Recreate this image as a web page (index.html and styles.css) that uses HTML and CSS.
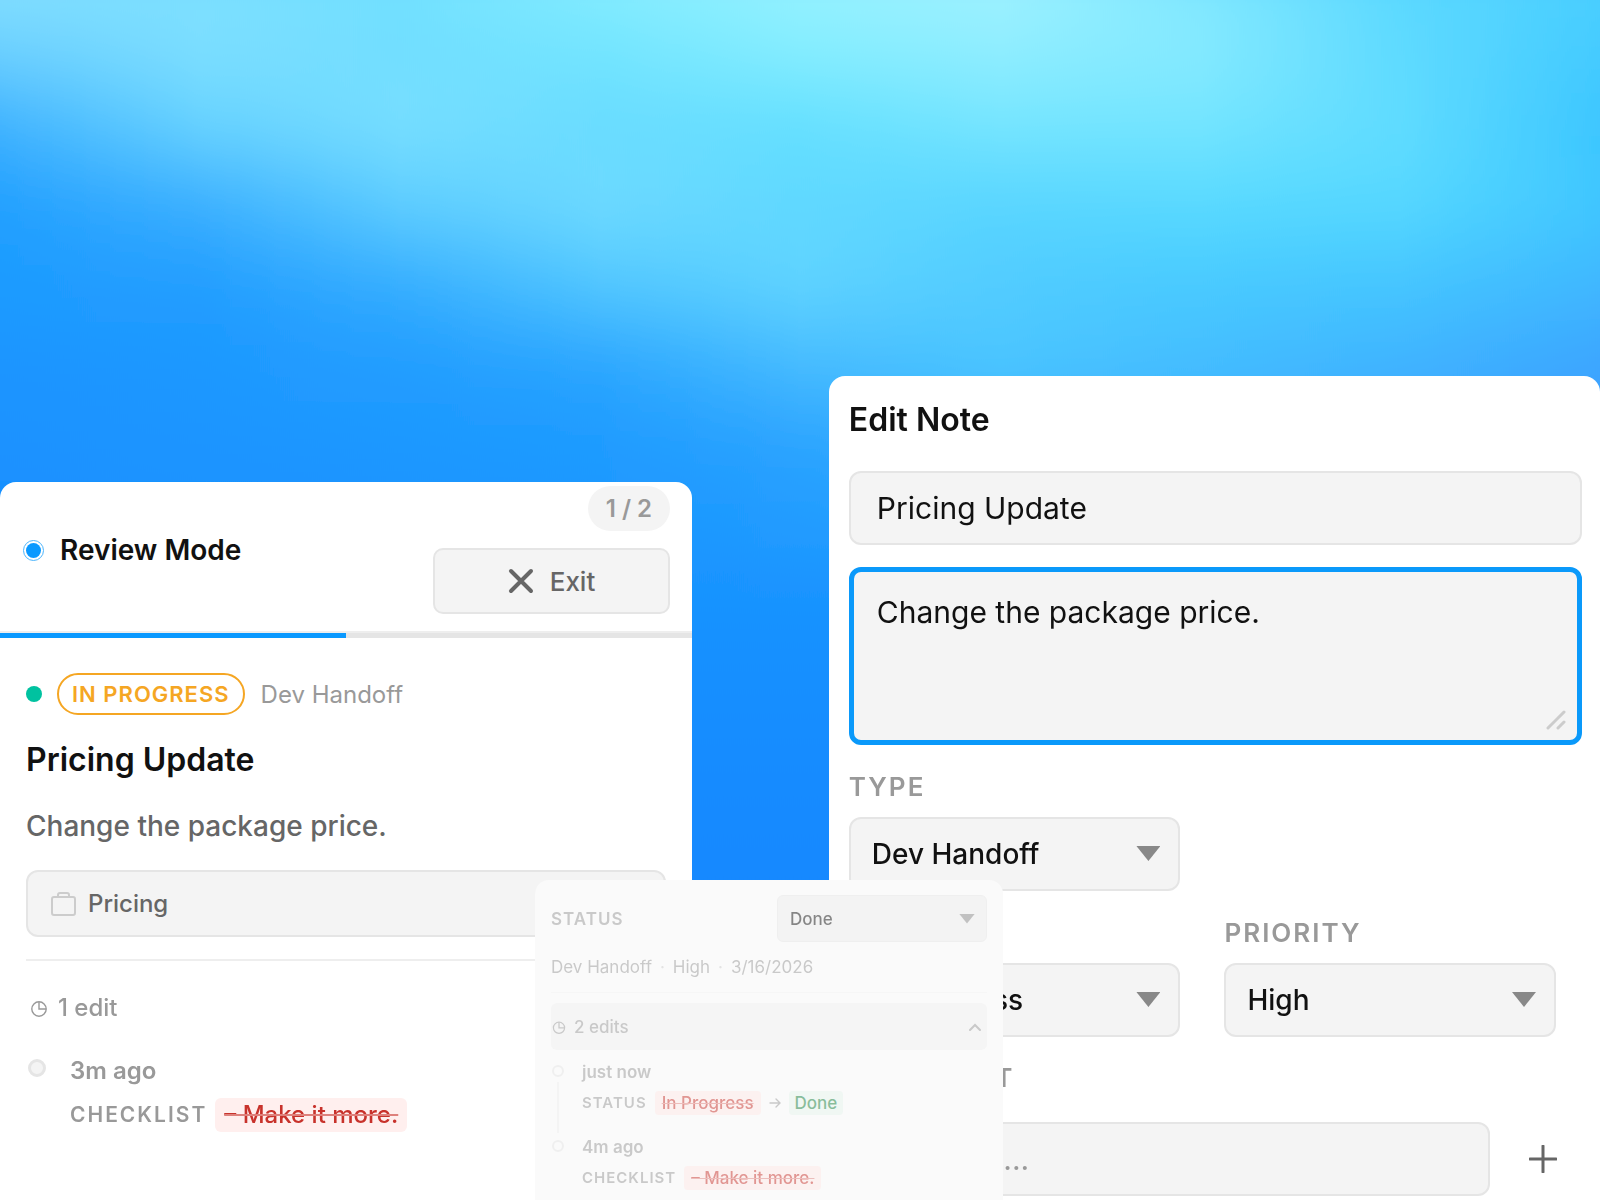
FILE: index.html
```html
<!DOCTYPE html>
<html lang="en">
<head>
    <meta charset="UTF-8">
    <meta name="viewport" content="width=device-width, initial-scale=1.0">
    <title>Review Mode</title>
    <link rel="stylesheet" href="styles.css">
</head>
<body>
    <svg class="filters" width="0" height="0" aria-hidden="true">
        <filter id="blend" x="0" y="0" width="1" height="1"><feGaussianBlur stdDeviation="0 38"/></filter>
    </svg>
    <div class="wallpaper" aria-hidden="true">
        <div class="band band-1"></div>
        <div class="band band-2"></div>
        <div class="band band-3"></div>
        <div class="band band-4"></div>
        <div class="band band-5"></div>
        <div class="band band-6"></div>
        <div class="band band-7"></div>
        <div class="band band-8"></div>
        <div class="band band-rest"></div>
    </div>

    <main class="stage">
        <section class="panel review">
            <header class="review-header">
                <div class="review-title">
                    <span class="live-dot"></span>
                    <h2>Review Mode</h2>
                </div>
                <div class="review-actions">
                    <span class="counter">1 / 2</span>
                    <button type="button" class="exit-btn">
                        <svg width="26" height="26" viewBox="0 0 26 26" fill="none" stroke="currentColor" stroke-width="4" stroke-linecap="round"><path d="M3 3l20 20M23 3L3 23"/></svg>
                        Exit
                    </button>
                </div>
            </header>
            <div class="progress"><div class="progress-fill" style="width: 50%"></div></div>

            <div class="review-body">
                <div class="tags">
                    <span class="priority-dot"></span>
                    <span class="badge">IN PROGRESS</span>
                    <span class="tag-type">Dev Handoff</span>
                </div>
                <h3>Pricing Update</h3>
                <p class="desc">Change the package price.</p>
                <div class="frame-box">
                    <svg width="26" height="26" viewBox="0 0 26 26" fill="none" stroke="#ccc" stroke-width="2"><rect x="1" y="6" width="23" height="18" rx="2"/><path d="M7 6V4a2 2 0 0 1 2-2h7a2 2 0 0 1 2 2v2"/></svg>
                    Pricing
                </div>
                <div class="history">
                    <div class="history-title">
                        <svg width="18" height="18" viewBox="0 0 18 18" fill="none" stroke="currentColor" stroke-width="1.4"><circle cx="9" cy="10" r="7.2"/><path d="M9 3v7h7"/></svg>
                        1 edit
                    </div>
                    <div class="entry">
                        <span class="entry-dot"></span>
                        <div>
                            <div class="entry-time">3m ago</div>
                            <div class="change"><span class="field">CHECKLIST</span><del>– Make it more.</del></div>
                        </div>
                    </div>
                </div>
            </div>
        </section>

        <section class="panel edit">
            <h1>Edit Note</h1>
            <input class="control" type="text" value="Pricing Update" aria-label="Title">
            <div class="textarea-wrap">
                <textarea class="control" aria-label="Description">Change the package price.</textarea>
                <svg class="grip" width="20" height="20" viewBox="0 0 20 20" stroke="#ccc" stroke-width="3" stroke-linecap="round"><path d="M2 18L18 2M12 18l6-6"/></svg>
            </div>

            <div class="fields">
                <div class="form-field">
                    <label for="type">TYPE</label>
                    <div class="select-wrap">
                        <select class="control" id="type"><option>Dev Handoff</option></select>
                    </div>
                </div>
            </div>
            <div class="fields">
                <div class="form-field">
                    <label for="status">STATUS</label>
                    <div class="select-wrap">
                        <select class="control" id="status"><option>In Progress</option></select>
                    </div>
                </div>
                <div class="form-field">
                    <label for="priority">PRIORITY</label>
                    <div class="select-wrap">
                        <select class="control" id="priority"><option>High</option></select>
                    </div>
                </div>
            </div>
            <div class="form-field checklist">
                <label for="item">CHECKLIST</label>
                <div class="add-row">
                    <input class="control" type="text" id="item" placeholder="Add item...">
                    <button type="button" class="add-btn" aria-label="Add">
                        <svg width="28" height="28" viewBox="0 0 28 28" stroke="#666" stroke-width="3" stroke-linecap="round"><path d="M14 1v26M1 14h26"/></svg>
                    </button>
                </div>
            </div>
        </section>

        <section class="popup">
            <div class="popup-content">
                <div class="status-row">
                    <label for="popupStatus">STATUS</label>
                    <div class="select-wrap">
                        <select class="control" id="popupStatus"><option>Done</option></select>
                    </div>
                </div>
                <div class="meta"><span>Dev Handoff</span><i>·</i><span>High</span><i>·</i><span>3/16/2026</span></div>
                <button type="button" class="edits-btn">
                    <svg width="14" height="14" viewBox="0 0 18 18" fill="none" stroke="currentColor" stroke-width="1.6"><circle cx="9" cy="10" r="7.2"/><path d="M9 3v7h7"/></svg>
                    2 edits
                    <svg class="chevron" width="12" height="8" viewBox="0 0 12 8" fill="none" stroke="currentColor" stroke-width="2" stroke-linecap="round"><path d="M1 7l5-5 5 5"/></svg>
                </button>
                <div class="entry with-line">
                    <span class="entry-dot"></span>
                    <div>
                        <div class="entry-time">just now</div>
                        <div class="change">
                            <span class="field">STATUS</span><del>In Progress</del>
                            <svg width="12" height="12" viewBox="0 0 12 12" fill="none" stroke="#999" stroke-width="1.4" stroke-linecap="round"><path d="M1 6h10M7 2l4 4-4 4"/></svg>
                            <ins>Done</ins>
                        </div>
                    </div>
                </div>
                <div class="entry">
                    <span class="entry-dot"></span>
                    <div>
                        <div class="entry-time">4m ago</div>
                        <div class="change"><span class="field">CHECKLIST</span><del>– Make it more.</del></div>
                    </div>
                </div>
            </div>
        </section>
    </main>
</body>
</html>
```

FILE: styles.css
```css
* {
    box-sizing: border-box;
}
body {
    margin: 0;
    font-family: Inter, "Liberation Sans", sans-serif;
    color: #111;
    background: #1a92ff;
    overflow: hidden;
}
h1, h2, h3, p {
    margin: 0;
}
button, input, select, textarea {
    font-family: inherit;
}
/* Background: horizontal gradients blended into each other vertically */
.filters {
    position: absolute;
}
.wallpaper {
    position: fixed;
    top: -80px;
    bottom: -80px;
    left: 0;
    right: 0;
    display: flex;
    flex-direction: column;
    filter: url(#blend);
}
.band {
    flex: none;
    height: 80px;
}
.band-1 {
    background: linear-gradient(90deg, #8ae2ff, #7ae0ff, #74e2ff, #8aeeff, #98f2ff, #a2f3ff, #7ae4ff, #5ad8ff, #4cd0ff);
}
.band-2 {
    background: linear-gradient(90deg, #70d4ff, #7edfff, #70deff, #74e6ff, #88efff, #92eeff, #86eaff, #5edaff, #46ccff);
}
.band-3 {
    background: linear-gradient(90deg, #40b4ff, #68d4ff, #78dfff, #68dcff, #64e0ff, #76e6ff, #74e5ff, #60dcff, #3cc6ff);
}
.band-4 {
    background: linear-gradient(90deg, #22a0ff, #3ab0ff, #5eceff, #6edaff, #60d8ff, #58d6ff, #58daff, #56d8ff, #40c8ff);
}
.band-5 {
    background: linear-gradient(90deg, #1e9bff, #229eff, #34aeff, #52c8ff, #60d4ff, #52ccff, #48caff, #44c6ff, #40b8ff);
}
.band-6 {
    background: linear-gradient(90deg, #1c95ff, #1e98ff, #229dff, #2aa6ff, #46bcff, #4cc6ff, #44beff, #40b4ff, #3ca6ff);
}
.band-7 {
    background: linear-gradient(90deg, #1a92ff, #1c95ff, #1e98ff, #1f9bff, #2ba4ff, #38b0ff, #3cacff, #3ca4ff, #3a9cff);
}
.band-8 {
    background: linear-gradient(90deg, #188fff, #1991ff, #1a94ff, #1b96ff, #219cff, #2aa4ff, #30a4ff, #309cff, #3096ff);
}
.band-rest {
    flex: 1;
    background: linear-gradient(#1a94ff, #148bff 30%, #1086ff 60%, #0c82ff);
}
.stage {
    position: relative;
    display: flex;
    justify-content: space-between;
    height: 100vh;
    overflow: hidden;
}
.panel {
    background: #fff;
    border-radius: 16px 16px 0 0;
}
/* Review panel */
.review {
    width: 43.25%;
    margin-top: 482px;
}
.review-header {
    display: flex;
    justify-content: space-between;
    align-items: center;
    height: 151px;
    padding: 0 22px 13px 23px;
    border-bottom: 2px solid #eee;
}
.review-title {
    display: flex;
    align-items: center;
    gap: 16px;
}
.review-title h2 {
    font-size: 28px;
    font-weight: 600;
}
.live-dot {
    width: 21px;
    height: 21px;
    border: 1px solid #4db5fc;
    border-radius: 50%;
    background: #0a99ff content-box;
    padding: 2px;
}
.review-actions {
    display: flex;
    flex-direction: column;
    align-items: flex-end;
    gap: 17px;
}
.counter {
    height: 45px;
    padding: 0 18px;
    border-radius: 23px;
    background: #f4f4f4;
    color: #999;
    font-size: 24px;
    font-weight: 600;
    line-height: 45px;
}
.exit-btn {
    display: flex;
    justify-content: center;
    align-items: center;
    gap: 16px;
    width: 237px;
    height: 66px;
    border: 2px solid #e5e5e5;
    border-radius: 10px;
    background: #f4f4f4;
    color: #666;
    font-size: 26px;
    font-weight: 500;
}
.progress {
    height: 5px;
    background: #e5e5e5;
}
.progress-fill {
    height: 100%;
    background: #0a99ff;
}
.review-body {
    padding: 35px 26px;
}
.tags {
    display: flex;
    align-items: center;
    gap: 16px;
}
.priority-dot {
    width: 16px;
    height: 16px;
    border-radius: 50%;
    background: #00c2a0;
}
.badge {
    margin-left: -1px;
    padding: 0 13px;
    border: 2px solid #f5a623;
    border-radius: 21px;
    color: #f5a623;
    font-size: 22px;
    font-weight: 600;
    letter-spacing: 1px;
    line-height: 38px;
}
.tag-type {
    color: #999;
    font-size: 24px;
}
.review-body h3 {
    margin-top: 23px;
    font-size: 32px;
    font-weight: 600;
    line-height: 44px;
}
.desc {
    margin-top: 24px;
    color: #666;
    font-size: 28px;
    font-weight: 500;
    line-height: 40px;
}
.frame-box {
    display: flex;
    align-items: center;
    gap: 11px;
    height: 67px;
    margin-top: 24px;
    padding: 0 23px;
    border: 2px solid #e5e5e5;
    border-radius: 12px;
    background: #f4f4f4;
    color: #666;
    font-size: 24px;
    font-weight: 500;
}
.history {
    margin-top: 22px;
    padding-top: 31px;
    border-top: 2px solid #eee;
}
.history-title {
    display: flex;
    align-items: center;
    gap: 10px;
    padding-left: 4px;
    color: #999;
    font-size: 24px;
    font-weight: 500;
    line-height: 32px;
}
/* Change history, shared by the review panel and the popup */
.entry {
    display: flex;
    gap: 24px;
    margin-top: 29px;
    padding-left: 2px;
}
.entry-dot {
    flex: none;
    width: 18px;
    height: 18px;
    margin-top: 6px;
    border: 3px solid #e5e5e5;
    border-radius: 50%;
    background: #f4f4f4;
}
.entry-time {
    color: #999;
    font-size: 24px;
    font-weight: 600;
    line-height: 36px;
}
.change {
    display: flex;
    align-items: center;
    gap: 8px;
    margin-top: 9px;
    font-size: 24px;
    line-height: 34px;
}
.field {
    color: #999;
    font-size: 21px;
    font-weight: 600;
    letter-spacing: 2px;
}
.change del {
    padding: 0 9px;
    border-radius: 6px;
    background: #ffefee;
    color: #c8322b;
    font-weight: 500;
    text-decoration: line-through 2px #de817c;
}
.change ins {
    padding: 0 6px;
    border-radius: 4px;
    background: #e6f4ec;
    color: #16813d;
    font-weight: 500;
    text-decoration: none;
}
/* Edit form */
.edit {
    width: 48.2%;
    margin-top: 376px;
    padding: 24px 18px 0 20px;
}
.edit h1 {
    font-size: 32px;
    font-weight: 600;
    line-height: 40px;
}
.control {
    display: block;
    width: 100%;
    height: 74px;
    padding: 0 26px;
    border: 2px solid #e5e5e5;
    border-radius: 12px;
    outline: none;
    background: #f4f4f4;
    color: #111;
    font-size: 30px;
}
.edit > .control {
    margin-top: 31px;
}
.textarea-wrap {
    position: relative;
    margin-top: 22px;
}
textarea.control {
    height: 178px;
    padding: 20px 23px;
    border: 5px solid #0a99fa;
    line-height: 40px;
    resize: none;
}
.grip {
    position: absolute;
    right: 16px;
    bottom: 15px;
}
.fields {
    display: grid;
    grid-template-columns: 1fr 1fr;
    column-gap: 44px;
    margin-top: 25px;
    padding-right: 26px;
}
.form-field label {
    display: block;
    margin-bottom: 13px;
    color: #999;
    font-size: 26px;
    font-weight: 600;
    letter-spacing: 2px;
    line-height: 34px;
}
.select-wrap {
    position: relative;
}
.select-wrap::after {
    content: "";
    position: absolute;
    top: 50%;
    right: 20px;
    width: 24px;
    height: 15px;
    margin-top: -8px;
    background: #888;
    clip-path: polygon(0 0, 100% 0, 50% 100%);
    pointer-events: none;
}
select.control {
    appearance: none;
    padding: 0 21px;
    font-size: 28px;
    font-weight: 500;
}
.form-field.checklist {
    margin-top: 24px;
}
.form-field.checklist label {
    margin-bottom: 27px;
}
.add-row {
    display: flex;
    align-items: center;
    gap: 24px;
    padding-right: 10px;
}
.add-row .control {
    flex: 1;
}
.add-row .control::placeholder {
    color: #999;
}
.add-btn {
    display: grid;
    place-items: center;
    width: 58px;
    height: 58px;
    padding: 0;
    border: none;
    background: none;
}
/* Popup over both panels */
.popup {
    position: absolute;
    top: 880px;
    left: 535px;
    width: 468px;
    height: 400px;
    padding: 15px 16px;
    border-radius: 14px;
    background: #fafafa;
}
.popup-content {
    opacity: 0.5;
}
.status-row {
    display: flex;
    justify-content: space-between;
    align-items: center;
}
.status-row label {
    color: #999;
    font-size: 17px;
    font-weight: 600;
    letter-spacing: 1px;
}
.status-row .select-wrap {
    width: 210px;
}
.status-row .control {
    height: 47px;
    padding: 0 12px;
    border: 1px solid #e5e5e5;
    border-radius: 6px;
    background: #ececec;
    font-size: 17px;
}
.status-row .select-wrap::after {
    right: 12px;
    width: 16px;
    height: 10px;
    margin-top: -5px;
}
.meta {
    display: flex;
    gap: 8px;
    padding: 14px 0;
    border-bottom: 1px solid #f2f2f2;
    color: #999;
    font-size: 17px;
    line-height: 22px;
}
.meta i {
    color: #ccc;
    font-style: normal;
}
.edits-btn {
    display: flex;
    align-items: center;
    gap: 8px;
    width: 100%;
    height: 47px;
    margin-top: 10px;
    padding: 0 6px 0 1px;
    border: none;
    border-radius: 6px;
    background: #f0f0f0;
    color: #999;
    font-size: 17px;
    font-weight: 500;
}
.chevron {
    margin-left: auto;
}
.popup .entry {
    position: relative;
    gap: 18px;
    margin-top: 12px;
    padding-left: 1px;
}
.popup .entry + .entry {
    margin-top: 22px;
}
.popup .entry-dot {
    width: 12px;
    height: 12px;
    margin-top: 3px;
    border-width: 2px;
    background: none;
}
.with-line::before {
    content: "";
    position: absolute;
    top: 20px;
    bottom: -18px;
    left: 6px;
    width: 2px;
    background: #eee;
}
.popup .entry-time {
    font-size: 17px;
    line-height: 20px;
}
.popup .change {
    gap: 8px;
    margin-top: 9px;
    font-size: 17px;
    line-height: 24px;
}
.popup .field {
    font-size: 15px;
    letter-spacing: 1px;
}
.popup del {
    padding: 0 7px;
    border-radius: 4px;
    background: #ffe8e6;
    text-decoration-thickness: 1px;
}
```
